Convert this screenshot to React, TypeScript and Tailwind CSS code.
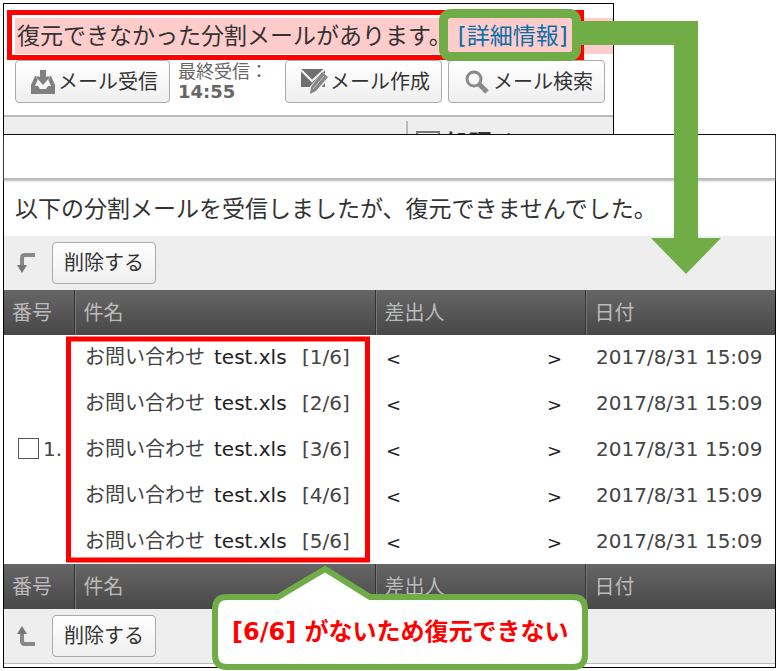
import type { ReactNode } from "react";
import clsx from "clsx";

const COLUMNS = ["番号", "件名", "差出人", "日付"];

const MAILS = [1, 2, 3, 4, 5].map((part) => ({
  part,
  subject: "お問い合わせ",
  file: "test.xls",
  date: "2017/8/31 15:09",
}));

function InboxIcon() {
  return (
    <svg width="26" height="26" viewBox="0 0 26 26" fill="#808080" aria-hidden="true">
      <path
        fillRule="evenodd"
        d="M5 7h16l4 9v9H1v-9zM8 10l-3 7h3l2 3h6l2-3h3l-3-7z"
      />
      <path
        d="M10 1h6v7h4l-7 8-7-8h4z"
        stroke="#f4f4f4"
        strokeWidth="1"
        paintOrder="stroke"
      />
    </svg>
  );
}

function ComposeIcon() {
  return (
    <svg width="28" height="27" viewBox="0 0 28 27" fill="none" aria-hidden="true">
      <path d="M1 1h24v18H1z" fill="#707070" />
      <path d="M1 2l11 11L25 1" stroke="#f6f6f6" strokeWidth="2" />
      <path d="M26 7L13 22" stroke="#f6f6f6" strokeWidth="9" />
      <path d="M22 4l6 5-12 14-6 3 1-7z" fill="#858585" />
      <path d="M24 8L13 21" stroke="#c8c8c8" strokeWidth="1" />
    </svg>
  );
}

function SearchIcon() {
  return (
    <svg width="24" height="24" viewBox="0 0 24 24" fill="none" stroke="#8a8a8a" aria-hidden="true">
      <circle cx="9" cy="9" r="7" strokeWidth="3" />
      <path d="M14 14l8 8" strokeWidth="5" />
    </svg>
  );
}

function TurnArrow({ up = false }: { up?: boolean }) {
  return (
    <svg
      width="20"
      height="22"
      viewBox="0 0 20 22"
      className={clsx("shrink-0", up && "-scale-y-100")}
      aria-hidden="true"
    >
      <path d="M19 3H9Q6 3 6 6V14" fill="none" stroke="#888" strokeWidth="4" />
      <path d="M1 13h10l-5 8z" fill="#777" />
    </svg>
  );
}

function Button({ children, className }: { children: ReactNode; className?: string }) {
  return (
    <button
      type="button"
      className={clsx(
        "flex shrink-0 items-center rounded border border-[#aaa] bg-linear-to-b from-white to-[#efefef] text-xl whitespace-nowrap text-[#333]",
        className,
      )}
    >
      {children}
    </button>
  );
}

function ActionBar({ up = false }: { up?: boolean }) {
  return (
    <div className="flex items-center gap-4 bg-[#eee] px-3 py-1.5">
      <TurnArrow up={up} />
      <Button className="h-[42px] w-[104px] justify-center">削除する</Button>
    </div>
  );
}

function ColumnTitles() {
  return (
    <tr className="h-[45px] bg-linear-to-b from-[#666] to-[#484848] text-left text-[#bbb]">
      {COLUMNS.map((title) => (
        <th
          key={title}
          scope="col"
          className="border-l border-[#777] pl-2 font-normal shadow-[-1px_0_0_#333] first:border-l-0 first:shadow-none"
        >
          {title}
        </th>
      ))}
    </tr>
  );
}

function Toolbar() {
  return (
    <section className="relative mr-[162px] h-[131px] overflow-hidden border border-b-0 border-black bg-white">
      <div className="mt-3.5 ml-[11px] flex h-9 items-center bg-[#fcc] pl-0.5 text-[23px] whitespace-nowrap text-[#333]">
        <span>復元できなかった分割メールがあります。</span>
        <a href="#details" className="ml-1.5 text-[#0a6ea8]">
          [詳細情報]
        </a>
      </div>
      <div className="mt-1.5 flex items-center pl-[11px]">
        <Button className="h-[43px] w-[155px] gap-0.5 pl-3.5">
          <InboxIcon />
          メール受信
        </Button>
        <div className="ml-2 w-[107px] text-lg leading-5 whitespace-nowrap text-[#666]">
          最終受信：
          <br />
          <b>14:55</b>
        </div>
        <Button className="h-[43px] w-[157px] gap-0.5 pl-3.5">
          <ComposeIcon />
          メール作成
        </Button>
        <Button className="ml-1.5 h-[43px] w-[157px] gap-1 pl-4">
          <SearchIcon />
          メール検索
        </Button>
      </div>
      <div className="mt-3 border-t-2 border-[#bbb] bg-[#eee] pt-1 pl-[402px]">
        <div className="flex h-8 gap-1.5 border-l-2 border-[#bbb] pt-1.5 pl-2 text-[23px] leading-8 font-bold whitespace-nowrap text-[#333]">
          <span className="mt-1 size-6 border-2 border-[#777]" />
          処理メール
        </div>
      </div>
    </section>
  );
}

function SplitMailList() {
  return (
    <section className="relative border border-black bg-white">
      <div className="h-[45px] border-b-2 border-[#bbb] shadow-[0_1px_2px_#bbb]" />
      <h1 className="flex h-14 items-center pt-0.5 pl-[11px] text-[23px] whitespace-nowrap text-[#333]">
        以下の分割メールを受信しましたが、復元できませんでした。
      </h1>
      <ActionBar />
      <table className="w-full table-fixed text-xl whitespace-nowrap text-[#444]">
        <colgroup>
          <col className="w-[71px]" />
          <col className="w-[301px]" />
          <col className="w-[210px]" />
          <col />
        </colgroup>
        <thead>
          <ColumnTitles />
        </thead>
        <tbody>
          {MAILS.map((mail, i) => (
            <tr key={mail.part} className="h-[46px] last:h-[45px]">
              {i === 0 && (
                <td rowSpan={MAILS.length} className="pb-0.5">
                  <label className="flex items-center gap-1 pl-3.5">
                    <input
                      type="checkbox"
                      className="size-[21px] shrink-0 appearance-none border border-[#555] bg-white"
                    />
                    1.
                  </label>
                </td>
              )}
              <td className="pb-0.5 pl-2.5">
                <div className="flex items-center">
                  <span className="w-[129px]">{mail.subject}</span>
                  <span className="w-[88px] text-[#222]">{mail.file}</span>
                  <span>[{mail.part}/6]</span>
                </div>
              </td>
              <td className="pt-0.5 pl-2.5">
                <div className="flex w-[176px] justify-between text-lg text-[#222]">
                  <span>&lt;</span>
                  <span>&gt;</span>
                </div>
              </td>
              <td className="pb-0.5 pl-2.5">{mail.date}</td>
            </tr>
          ))}
        </tbody>
        <tfoot>
          <ColumnTitles />
        </tfoot>
      </table>
      <ActionBar up />
      <div className="h-1 border-t border-[#bbb] bg-white" />
    </section>
  );
}

// Marks, arrow and speech bubble laid over the two windows
function Annotations() {
  return (
    <>
      <svg
        className="pointer-events-none absolute top-0 left-0"
        width="778"
        height="671"
        viewBox="0 0 778 671"
        fill="none"
        aria-hidden="true"
      >
        <rect x="9.5" y="12.5" width="572" height="45" stroke="#f00" strokeWidth="5" />
        <rect x="68.5" y="339" width="299" height="221" stroke="#f00" strokeWidth="5" />
        <rect x="443.5" y="13.5" width="133" height="43" rx="7" stroke="#70ad47" strokeWidth="9" />
        <path d="M578 21H698V238H721L686 274L651 238H674V45H578Z" fill="#70ad47" />
        <path
          d="M227 597H278L325 569L370 597H573Q585 597 585 609V655Q585 667 573 667H227Q215 667 215 655V609Q215 597 227 597Z"
          fill="#fff"
          stroke="#70ad47"
          strokeWidth="6"
        />
      </svg>
      <p className="absolute top-[616px] left-[232px] text-2xl leading-8 font-bold whitespace-nowrap text-[#f00]">
        [6/6] がないため復元できない
      </p>
    </>
  );
}

export default function App() {
  return (
    <main className="relative bg-white pt-[3px] pr-0.5 pb-[3px] pl-[3px] font-['DejaVu_Sans','Noto_Sans_CJK_JP',sans-serif]">
      <Toolbar />
      <SplitMailList />
      <Annotations />
    </main>
  );
}
